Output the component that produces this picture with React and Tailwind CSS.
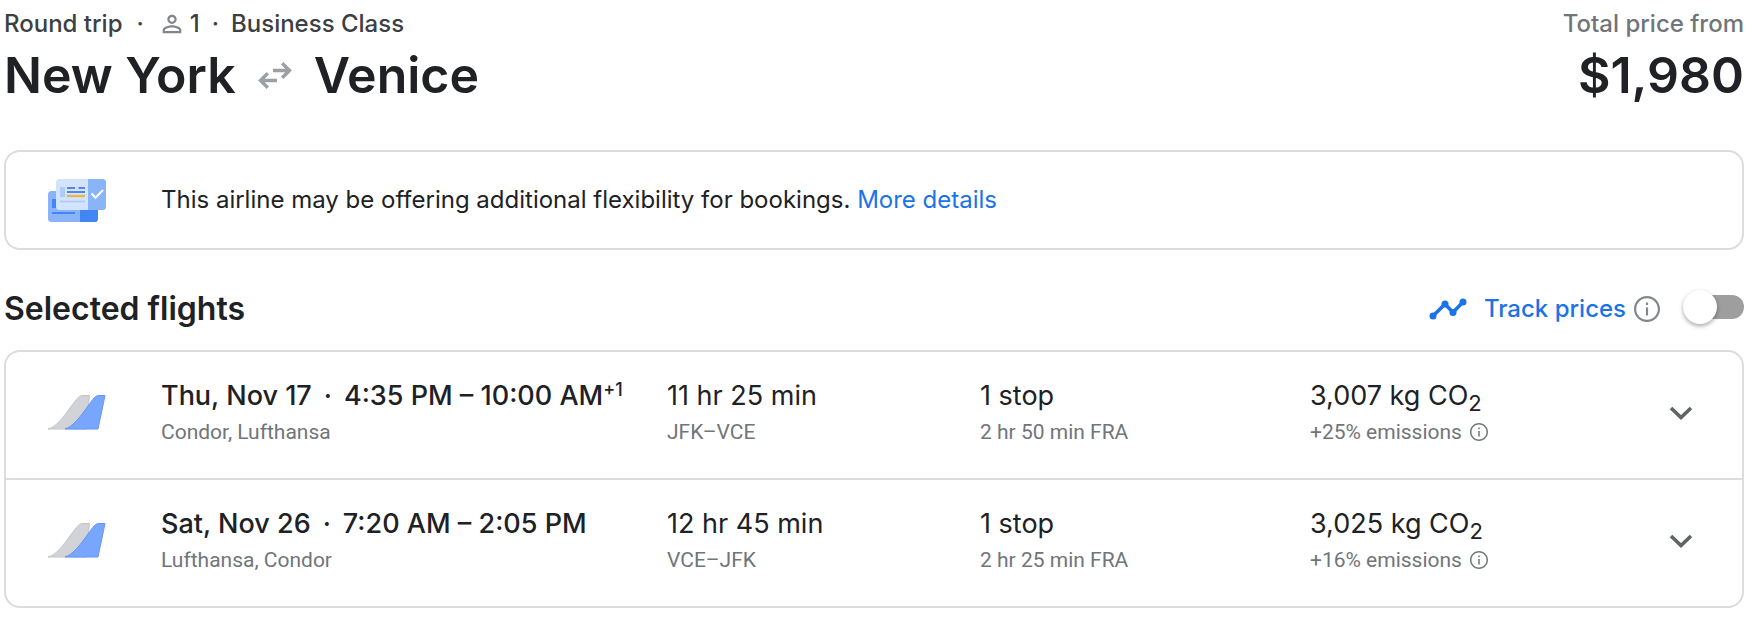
import { useState } from 'react';

const FLIGHTS = [
    {
        id: 'outbound',
        date: 'Thu, Nov 17',
        times: '4:35 PM – 10:00 AM',
        dayOffset: '+1',
        airlines: 'Condor, Lufthansa',
        duration: '11 hr 25 min',
        route: 'JFK–VCE',
        stops: '1 stop',
        layover: '2 hr 50 min FRA',
        co2: '3,007',
        emissions: '+25% emissions',
    },
    {
        id: 'return',
        date: 'Sat, Nov 26',
        times: '7:20 AM – 2:05 PM',
        airlines: 'Lufthansa, Condor',
        duration: '12 hr 45 min',
        route: 'VCE–JFK',
        stops: '1 stop',
        layover: '2 hr 25 min FRA',
        co2: '3,025',
        emissions: '+16% emissions',
    },
];

function PersonIcon() {
    return (
        <svg viewBox="0 0 24 24" className="size-7 text-[#80868b]" fill="currentColor" aria-hidden="true">
            <path d="M12 5.9c1.16 0 2.1.94 2.1 2.1s-.94 2.1-2.1 2.1S9.9 9.16 9.9 8s.94-2.1 2.1-2.1m0 9c2.97 0 6.1 1.46 6.1 2.1v1.1H5.9V17c0-.64 3.13-2.1 6.1-2.1M12 4C9.79 4 8 5.79 8 8s1.79 4 4 4 4-1.79 4-4-1.79-4-4-4zm0 9c-2.67 0-8 1.34-8 4v3h16v-3c0-2.66-5.33-4-8-4z" />
        </svg>
    );
}

function RoundTripIcon() {
    return (
        <svg viewBox="0 0 34 28" className="h-7 w-[34px] text-[#9aa0a6]" fill="none" stroke="currentColor" strokeWidth="3.4" aria-label="to and from" role="img">
            <path d="M15 9.5H31M24.2 2.2L31.5 9.5L24.2 16.8" />
            <path d="M19 19.5H3M9.8 12.2L2.5 19.5L9.8 26.8" />
        </svg>
    );
}

function BookingIcon() {
    return (
        <svg viewBox="0 0 58 43" className="h-[43px] w-[58px]" aria-hidden="true">
            <rect y="12" width="50" height="31" rx="3.5" fill="#8ab4f8" />
            <path d="M32 12H46.5a3.5 3.5 0 0 1 3.5 3.5V39.5a3.5 3.5 0 0 1-3.5 3.5H32z" fill="#4285f4" />
            <rect x="4" y="20" width="6" height="9" fill="#4285f4" />
            <rect x="4" y="33" width="23" height="2" fill="#4285f4" />
            <rect x="8" width="50" height="31" rx="3.5" fill="#d2e3fc" />
            <path d="M40 0H54.5a3.5 3.5 0 0 1 3.5 3.5V27.5a3.5 3.5 0 0 1-3.5 3.5H40z" fill="#8ab4f8" />
            <rect x="12" y="8" width="5" height="10" fill="#aecbfa" />
            <path d="M19 9H27M30.5 9H37M19 13H37" stroke="#5585ec" strokeWidth="2" />
            <path d="M19 17H37" stroke="#f2b13c" strokeWidth="2.2" />
            <path d="M12 22.5H37" stroke="#aecbfa" strokeWidth="1.8" />
            <path d="M43.5 14.5L47.5 18.7L55 11" fill="none" stroke="#fff" strokeWidth="2" />
        </svg>
    );
}

function TailsIcon() {
    return (
        <svg viewBox="0 0 58 35" className="h-[35px] w-[58px]" aria-hidden="true">
            <path d="M0 34C8 32 14 24 23 11.5C29 3.5 31 .5 35 .5H41.5L38 34Z" fill="#d2d3d6" stroke="#c4c5c9" strokeWidth="1" />
            <path d="M17 34C25 31.5 32 22 40 11C45.5 3.5 47 .5 51 .5H57L50 34Z" fill="#78a6ff" stroke="#6796f5" strokeWidth="1" />
        </svg>
    );
}

function TrendIcon() {
    return (
        <svg viewBox="0 0 38 22" className="h-[22px] w-[38px] text-[#1a73e8]" fill="currentColor" aria-hidden="true">
            <path d="M4 18L16 6L24 14.5L34 4" fill="none" stroke="currentColor" strokeWidth="3.6" />
            <circle cx="4" cy="18" r="3.5" />
            <circle cx="16" cy="6" r="3.5" />
            <circle cx="24" cy="14.5" r="3.5" />
            <circle cx="34" cy="4" r="3.5" />
        </svg>
    );
}

function InfoIcon({ className }) {
    return (
        <svg viewBox="0 0 24 24" className={className} fill="currentColor" aria-hidden="true">
            <path d="M11 6h2v2.2h-2zm0 4.5h2v7.5h-2zm1-10.5C5.37 0 0 5.37 0 12s5.37 12 12 12 12-5.37 12-12S18.63 0 12 0zm0 22C6.48 22 2 17.52 2 12S6.48 2 12 2s10 4.48 10 10-4.48 10-10 10z" />
        </svg>
    );
}

function SubLine({ children }) {
    return (
        <div className="mt-0.5 flex items-center gap-2 font-['Roboto',sans-serif] text-[21px] leading-8 text-[#70757a]">
            {children}
        </div>
    );
}

function FlightRow({ flight, open, onToggle }) {
    return (
        <li className="grid grid-cols-[155px_506fr_313fr_330fr_347fr_48px] items-center border-[#dadce0] pt-[26px] pr-[37px] pb-[30px] not-first:border-t-2">
            <div className="pb-0.5 pl-[42px]">
                <TailsIcon />
            </div>
            <div>
                <div className="flex gap-3 text-[27px] leading-9 font-medium whitespace-nowrap">
                    <span>{flight.date}</span>
                    <span>·</span>
                    <span className="flex">
                        {flight.times}
                        {flight.dayOffset && <span className="text-lg leading-6">{flight.dayOffset}</span>}
                    </span>
                </div>
                <SubLine>{flight.airlines}</SubLine>
            </div>
            <div>
                <div className="text-[27px] leading-9">{flight.duration}</div>
                <SubLine>{flight.route}</SubLine>
            </div>
            <div>
                <div className="text-[27px] leading-9">{flight.stops}</div>
                <SubLine>{flight.layover}</SubLine>
            </div>
            <div>
                <div className="text-[27px] leading-9">
                    {flight.co2} kg CO<sub className="text-[22px]">2</sub>
                </div>
                <SubLine>
                    {flight.emissions}
                    <button type="button" aria-label="About emissions">
                        <InfoIcon className="size-[18px]" />
                    </button>
                </SubLine>
            </div>
            <button
                type="button"
                aria-expanded={open}
                aria-label={`Flight details, ${flight.date}`}
                onClick={onToggle}
                className="flex size-12 items-center justify-center text-[#5f6368]"
            >
                <svg viewBox="0 0 24 14" className={`h-[14px] w-6 ${open ? 'rotate-180' : ''}`} fill="none" stroke="currentColor" strokeWidth="3.6">
                    <path d="M2 2L12 11.5L22 2" />
                </svg>
            </button>
        </li>
    );
}

export default function App() {
    const [tracking, setTracking] = useState(false);
    const [openId, setOpenId] = useState(null);

    return (
        <main className="bg-white pt-2 pr-4 pb-5 pl-1 font-['Inter',sans-serif] text-[#202124]">
            {/* Trip summary */}
            <header className="flex justify-between">
                <div>
                    <div className="flex items-center text-2xl leading-8 font-medium text-[#3c4043]">
                        <span>Round trip</span>
                        <span className="mx-3.5">·</span>
                        <PersonIcon />
                        <span className="ml-1">1</span>
                        <span className="mx-3">·</span>
                        <span>Business Class</span>
                    </div>
                    <h1 className="flex items-center gap-[22px] text-[50px] leading-[70px] font-semibold">
                        New York
                        <RoundTripIcon />
                        Venice
                    </h1>
                </div>
                <div className="text-right">
                    <div className="text-2xl leading-8 font-medium text-[#70757a]">Total price from</div>
                    <div className="text-[50px] leading-[70px] font-semibold">$1,980</div>
                </div>
            </header>

            {/* Flexibility notice */}
            <section className="mt-10 flex items-center rounded-2xl border-2 border-[#dadce0] py-[26px] pl-[42px]">
                <BookingIcon />
                <p className="ml-[55px] text-2xl leading-[44px]">
                    This airline may be offering additional flexibility for bookings.{' '}
                    <a href="#details" className="text-[#1a73e8]">More details</a>
                </p>
            </section>

            <div className="mt-[42px] mb-6 flex items-center justify-between">
                <h2 className="text-[32px] leading-[34px] font-semibold">Selected flights</h2>
                <div className="flex items-center">
                    <TrendIcon />
                    <label htmlFor="track-prices" className="ml-[17px] text-2xl leading-8 font-medium text-[#1a73e8]">
                        Track prices
                    </label>
                    <button type="button" aria-label="About price tracking" className="ml-2 text-[#80868b]">
                        <InfoIcon className="size-[26px]" />
                    </button>
                    <input
                        id="track-prices"
                        type="checkbox"
                        role="switch"
                        checked={tracking}
                        onChange={(e) => setTracking(e.target.checked)}
                        className="relative mb-1 ml-7 h-6 w-14 appearance-none rounded-full bg-[#9e9e9e] before:absolute before:-top-[5px] before:-left-[5px] before:size-[34px] before:rounded-full before:bg-white before:shadow-[0_2px_4px_rgba(0,0,0,0.35)] checked:bg-[#8ab4f8] checked:before:left-7 checked:before:bg-[#1a73e8]"
                    />
                </div>
            </div>

            {/* Selected legs */}
            <ul className="rounded-2xl border-2 border-[#dadce0]">
                {FLIGHTS.map((flight) => (
                    <FlightRow
                        key={flight.id}
                        flight={flight}
                        open={openId === flight.id}
                        onToggle={() => setOpenId(openId === flight.id ? null : flight.id)}
                    />
                ))}
            </ul>
        </main>
    );
}
